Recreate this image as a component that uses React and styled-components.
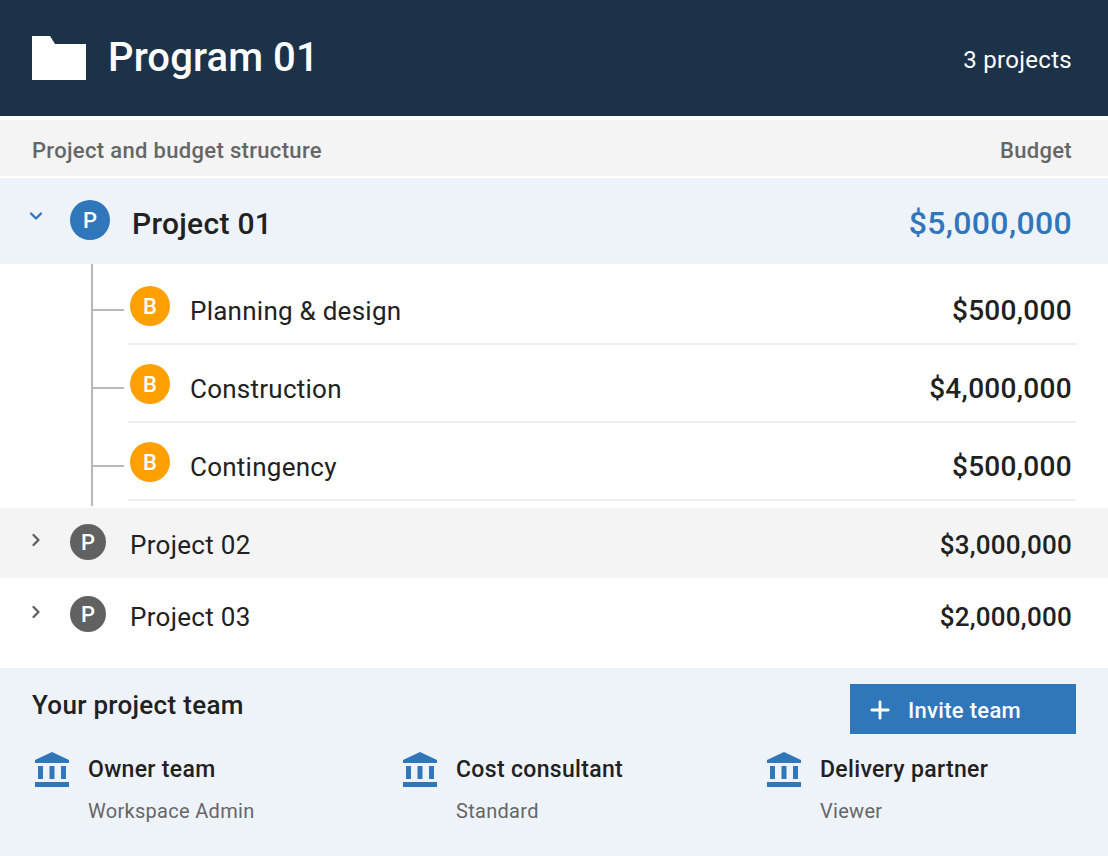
import React from "react";
import styled, { createGlobalStyle } from "styled-components";
import { Plus, ChevronDown, ChevronRight } from "lucide-react";

const GlobalStyle = createGlobalStyle`
  html, body {
    margin: 0;
    padding: 0;
    background: #fff;
    font-family: Roboto, "Liberation Sans", sans-serif;
    color: #212121;
  }
`;

const Page = styled.div`
  width: 1108px;
  height: 856px;
  overflow: hidden;
`;

const Header = styled.header`
  height: 116px;
  background: #1c3249;
  color: #fff;
  display: flex;
  align-items: center;
  justify-content: space-between;
  padding: 0 36px 0 32px;
  margin-bottom: 4px;
`;

const HeaderLeft = styled.div`
  display: flex;
  align-items: center;
  gap: 22px;
`;

const Title = styled.h1`
  margin: 0;
  font-size: 40px;
  font-weight: 500;
  letter-spacing: 0.1px;
  position: relative;
  top: -1px;
`;

const Count = styled.span`
  font-size: 24px;
  letter-spacing: 0.3px;
  position: relative;
  top: 2px;
`;

const ColumnHead = styled.div`
  height: 56px;
  background: #f4f4f4;
  color: #666;
  font-size: 22px;
  font-weight: 500;
  letter-spacing: 0.33px;
  display: flex;
  align-items: center;
  justify-content: space-between;
  padding: 4px 36px 0 32px;
  box-sizing: border-box;
  margin-bottom: 2px;
`;

const ProjectRow = styled.div`
  height: ${p => p.$height}px;
  background: ${p => p.$bg};
  display: flex;
  align-items: ${p => (p.$top ? "flex-start" : "center")};
  padding: ${p => (p.$top ? "18px" : "0")} 36px 0 0;
  box-sizing: border-box;
`;

const Toggle = styled.span`
  width: 70px;
  flex: none;
  display: flex;
  justify-content: flex-start;
  padding-left: 26px;
  box-sizing: border-box;
  color: ${p => p.$color};
  position: relative;
  top: ${p => p.$up}px;
`;

const Badge = styled.span`
  width: ${p => p.$size}px;
  height: ${p => p.$size}px;
  border-radius: 50%;
  background: ${p => p.$color};
  color: #fff;
  font-size: ${p => p.$fontSize}px;
  font-weight: 500;
  flex: none;
  display: flex;
  align-items: center;
  justify-content: center;
  position: relative;
  top: ${p => p.$up || 0}px;
`;

const Label = styled.span`
  position: relative;
  top: ${p => p.$down}px;
`;

const ProjectName = styled(Label)`
  flex: 1;
  margin-left: ${p => p.$gap}px;
  font-size: ${p => p.$size}px;
  font-weight: ${p => p.$weight};
  letter-spacing: ${p => p.$spacing}px;
`;

const ProjectAmount = styled(Label)`
  font-size: ${p => p.$size}px;
  font-weight: ${p => p.$weight};
  color: ${p => p.$color};
  letter-spacing: ${p => p.$spacing}px;
`;

const BudgetList = styled.div`
  height: 244px;
  display: flex;
  flex-direction: column;
  margin: 0 32px 0 91px;
  padding-top: 3px;
  box-sizing: border-box;
  position: relative;

  &::before {
    content: "";
    position: absolute;
    left: 0;
    top: 0;
    bottom: 2px;
    width: 2px;
    background: #b8b8b8;
  }
`;

const BudgetItem = styled.div`
  display: flex;
  height: 78px;
  flex: none;
`;

const Branch = styled.span`
  width: 31px;
  height: 2px;
  margin: 42px 4px 0 2px;
  flex: none;
  background: #b8b8b8;
`;

const BudgetBody = styled.div`
  flex: 1;
  display: flex;
  align-items: center;
  padding: 0 4px 0 2px;
  border-bottom: 2px solid #eee;
  box-sizing: border-box;
`;

const BudgetName = styled.span`
  flex: 1;
  margin-left: 20px;
  font-size: 26px;
  letter-spacing: 0.25px;
  position: relative;
  top: 6px;
`;

const BudgetAmount = styled.span`
  font-size: 28px;
  font-weight: 500;
  letter-spacing: 0.3px;
  position: relative;
  top: 5px;
`;

const Team = styled.section`
  height: 188px;
  background: #eef3fa;
  padding: 16px 32px 0;
  box-sizing: border-box;
`;

const TeamTop = styled.div`
  display: flex;
  justify-content: space-between;
  align-items: flex-start;
`;

const TeamTitle = styled.h2`
  margin: 6px 0 0;
  font-size: 26px;
  font-weight: 500;
  letter-spacing: 0.3px;
`;

const InviteButton = styled.button`
  width: 226px;
  height: 50px;
  border: 0;
  background: #3076bb;
  color: #fff;
  font-family: inherit;
  font-size: 22px;
  font-weight: 500;
  letter-spacing: 0.3px;
  display: flex;
  align-items: center;
  gap: 14px;
  padding: 2px 0 0 16px;
`;

const Members = styled.div`
  display: flex;
  margin-top: 18px;
`;

const Member = styled.div`
  width: ${p => p.$width}px;
  flex: none;
  display: flex;
  gap: 18px;
`;

const MemberIcon = styled.svg`
  width: 38px;
  height: 38px;
  flex: none;
  fill: #3076bb;
`;

const MemberText = styled.div`
  display: flex;
  flex-direction: column;
  padding-top: 2px;
`;

const MemberName = styled.span`
  font-size: 23px;
  font-weight: 500;
  letter-spacing: 0.33px;
  line-height: 32px;
`;

const MemberRole = styled.span`
  margin-top: 11px;
  font-size: 20px;
  color: #666;
  letter-spacing: 0.3px;
  line-height: 28px;
`;

const FolderIcon = () => (
  <svg width="54" height="44" viewBox="0 0 54 44" fill="#fff">
    <path d="M0 0h18l5 8h31v36H0z" />
  </svg>
);

const BankIcon = () => (
  <MemberIcon viewBox="0 0 38 38">
    <path d="M20 0 3 8v3h34V8z" />
    <path d="M6 14h5v13H6zM17.5 14h5v13h-5zM29 14h5v13h-5z" />
    <path d="M3 30h34v5H3z" />
  </MemberIcon>
);

const budgets = [
  { name: "Planning & design", amount: "$500,000" },
  { name: "Construction", amount: "$4,000,000" },
  { name: "Contingency", amount: "$500,000" },
];

const members = [
  { name: "Owner team", role: "Workspace Admin", width: 368 },
  { name: "Cost consultant", role: "Standard", width: 364 },
  { name: "Delivery partner", role: "Viewer", width: 300 },
];

const App = () => {
  return (
    <Page>
      <GlobalStyle />
      <Header>
        <HeaderLeft>
          <FolderIcon />
          <Title>Program 01</Title>
        </HeaderLeft>
        <Count>3 projects</Count>
      </Header>

      <ColumnHead>
        <span>Project and budget structure</span>
        <span>Budget</span>
      </ColumnHead>

      <ProjectRow $height={86} $bg="#eef3fa">
        <Toggle $color="#3076bb" $up={-5}>
          <ChevronDown size={20} strokeWidth={2.8} />
        </Toggle>
        <Badge $size={40} $color="#3076bb" $fontSize={22} $up={-1}>P</Badge>
        <ProjectName $gap={22} $size={30} $weight={500} $spacing={0.3} $down={2}>Project 01</ProjectName>
        <ProjectAmount $size={32} $weight={500} $color="#3076bb" $spacing={0.35} $down={2}>$5,000,000</ProjectAmount>
      </ProjectRow>

      <BudgetList>
        {budgets.map(b => (
          <BudgetItem key={b.name}>
            <Branch />
            <BudgetBody>
              <Badge $size={40} $color="#ffa000" $fontSize={22} $up={1}>B</Badge>
              <BudgetName>{b.name}</BudgetName>
              <BudgetAmount>{b.amount}</BudgetAmount>
            </BudgetBody>
          </BudgetItem>
        ))}
      </BudgetList>

      <ProjectRow $height={70} $bg="#f4f4f4">
        <Toggle $color="#616161" $up={-3}>
          <ChevronRight size={20} strokeWidth={2.8} />
        </Toggle>
        <Badge $size={36} $color="#616161" $fontSize={22} $up={-1}>P</Badge>
        <ProjectName $gap={24} $size={26} $weight={400} $spacing={0.3} $down={2}>Project 02</ProjectName>
        <ProjectAmount $size={26} $weight={500} $color="#212121" $spacing={0.25} $down={2}>$3,000,000</ProjectAmount>
      </ProjectRow>

      <ProjectRow $height={90} $bg="#fff" $top>
        <Toggle $color="#616161" $up={6}>
          <ChevronRight size={20} strokeWidth={2.8} />
        </Toggle>
        <Badge $size={36} $color="#616161" $fontSize={22}>P</Badge>
        <ProjectName $gap={24} $size={26} $weight={400} $spacing={0.3} $down={6}>Project 03</ProjectName>
        <ProjectAmount $size={26} $weight={500} $color="#212121" $spacing={0.25} $down={6}>$2,000,000</ProjectAmount>
      </ProjectRow>

      <Team>
        <TeamTop>
          <TeamTitle>Your project team</TeamTitle>
          <InviteButton>
            <Plus size={28} strokeWidth={2.4} />
            Invite team
          </InviteButton>
        </TeamTop>
        <Members>
          {members.map(m => (
            <Member key={m.name} $width={m.width}>
              <BankIcon />
              <MemberText>
                <MemberName>{m.name}</MemberName>
                <MemberRole>{m.role}</MemberRole>
              </MemberText>
            </Member>
          ))}
        </Members>
      </Team>
    </Page>
  );
};

export default App;
